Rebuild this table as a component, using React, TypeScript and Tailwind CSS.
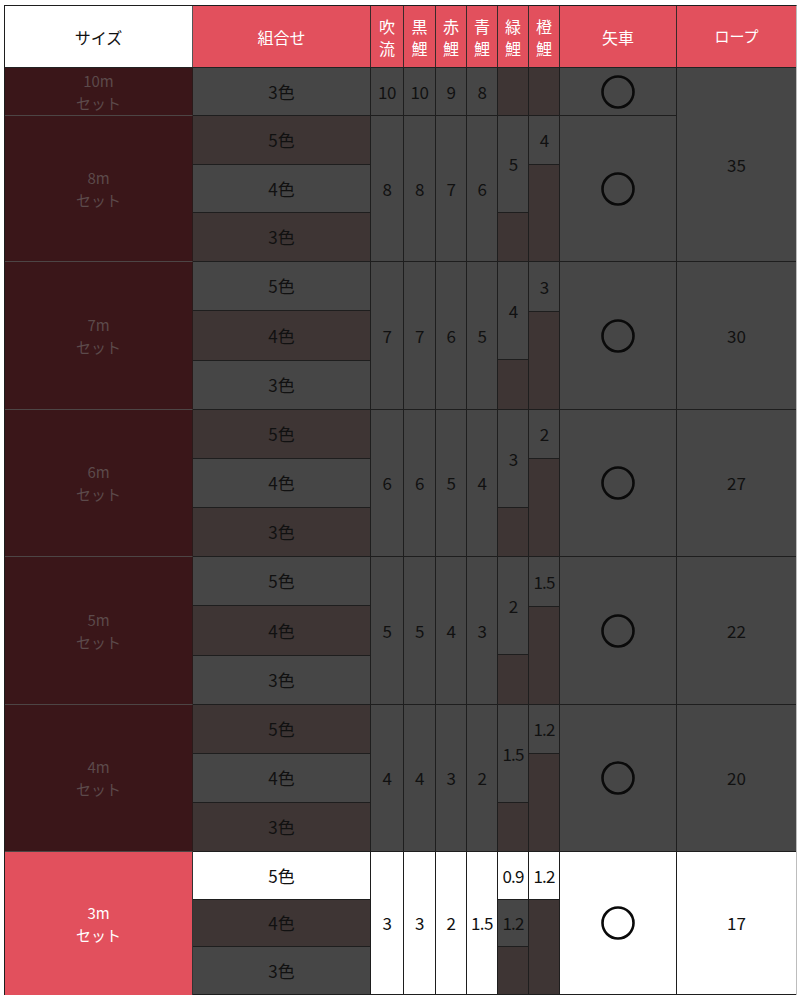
import React from "react";

const G = "bg-[#464646]";
const B = "bg-[#3e3534]";
const W = "bg-white";

type Sub = { v: string; span: 1 | 2 | 3; bg: string };

interface Group {
  size: string;
  h: string;
  combos: { label: string; bg: string }[];
  nums: string[];
  numBg: string;
  green: Sub[];
  orange: Sub[];
  wheelBg: string;
  hi?: boolean;
}

const grow: Record<number, string> = { 1: "flex-1", 2: "flex-[2]", 3: "flex-[3]" };

const groups: Group[] = [
  {
    size: "10m", h: "h-[48px]",
    combos: [{ label: "3色", bg: G }],
    nums: ["10", "10", "9", "8"], numBg: G,
    green: [{ v: "", span: 1, bg: B }],
    orange: [{ v: "", span: 1, bg: B }],
    wheelBg: G,
  },
  {
    size: "8m", h: "h-[146px]",
    combos: [{ label: "5色", bg: B }, { label: "4色", bg: G }, { label: "3色", bg: B }],
    nums: ["8", "8", "7", "6"], numBg: G,
    green: [{ v: "5", span: 2, bg: G }, { v: "", span: 1, bg: B }],
    orange: [{ v: "4", span: 1, bg: G }, { v: "", span: 2, bg: B }],
    wheelBg: G,
  },
  {
    size: "7m", h: "h-[148px]",
    combos: [{ label: "5色", bg: G }, { label: "4色", bg: B }, { label: "3色", bg: G }],
    nums: ["7", "7", "6", "5"], numBg: G,
    green: [{ v: "4", span: 2, bg: G }, { v: "", span: 1, bg: B }],
    orange: [{ v: "3", span: 1, bg: G }, { v: "", span: 2, bg: B }],
    wheelBg: G,
  },
  {
    size: "6m", h: "h-[147px]",
    combos: [{ label: "5色", bg: B }, { label: "4色", bg: G }, { label: "3色", bg: B }],
    nums: ["6", "6", "5", "4"], numBg: G,
    green: [{ v: "3", span: 2, bg: G }, { v: "", span: 1, bg: B }],
    orange: [{ v: "2", span: 1, bg: G }, { v: "", span: 2, bg: B }],
    wheelBg: G,
  },
  {
    size: "5m", h: "h-[148px]",
    combos: [{ label: "5色", bg: G }, { label: "4色", bg: B }, { label: "3色", bg: G }],
    nums: ["5", "5", "4", "3"], numBg: G,
    green: [{ v: "2", span: 2, bg: G }, { v: "", span: 1, bg: B }],
    orange: [{ v: "1.5", span: 1, bg: G }, { v: "", span: 2, bg: B }],
    wheelBg: G,
  },
  {
    size: "4m", h: "h-[147px]",
    combos: [{ label: "5色", bg: B }, { label: "4色", bg: G }, { label: "3色", bg: B }],
    nums: ["4", "4", "3", "2"], numBg: G,
    green: [{ v: "1.5", span: 2, bg: G }, { v: "", span: 1, bg: B }],
    orange: [{ v: "1.2", span: 1, bg: G }, { v: "", span: 2, bg: B }],
    wheelBg: G,
  },
  {
    size: "3m", h: "h-[143px]", hi: true,
    combos: [{ label: "5色", bg: W }, { label: "4色", bg: B }, { label: "3色", bg: G }],
    nums: ["3", "3", "2", "1.5"], numBg: W,
    green: [{ v: "0.9", span: 1, bg: W }, { v: "1.2", span: 1, bg: G }, { v: "", span: 1, bg: B }],
    orange: [{ v: "1.2", span: 1, bg: W }, { v: "", span: 2, bg: B }],
    wheelBg: W,
  },
];

const rope = [
  { v: "35", h: "h-[194px]", bg: G },
  { v: "30", h: "h-[148px]", bg: G },
  { v: "27", h: "h-[147px]", bg: G },
  { v: "22", h: "h-[148px]", bg: G },
  { v: "20", h: "h-[147px]", bg: G },
  { v: "17", h: "h-[143px]", bg: W },
];

const numW = ["w-[33px]", "w-[32px]", "w-[31px]", "w-[31px]"];

function Circle() {
  return (
    <svg width="36" height="36" viewBox="0 0 36 36">
      <circle cx="18" cy="18" r="15.5" fill="none" stroke="#0a0a0a" strokeWidth="2.6" />
    </svg>
  );
}

function VHead({ a, b, w }: { a: string; b: string; w: string }) {
  return (
    <div className={`${w} flex flex-col items-center justify-center border-r border-[#3a2a2a] text-[16px] leading-[22px] text-white`}>
      <span>{a}</span>
      <span>{b}</span>
    </div>
  );
}

export default function App() {
  return (
    <div className="bg-white w-[800px] h-[1000px] pt-[5px] pl-[4px] font-['Noto_Sans_CJK_JP','Noto_Sans',sans-serif]">
      <div className="w-[793px] border-t border-l border-r border-t-[#1e1e1e] border-l-[#1e1e1e] border-r-[#bdbdbd] flex flex-col">
        {/* header */}
        <div className="h-[62px] flex border-b border-[#222] bg-[#e2505d]">
          <div className="w-[188px] bg-white flex items-center justify-center text-[16px] text-[#111] border-r border-[#555]">サイズ</div>
          <div className="w-[178px] flex items-center justify-center text-[16px] text-white border-r border-[#3a2a2a]">組合せ</div>
          <VHead a="吹" b="流" w="w-[33px]" />
          <VHead a="黒" b="鯉" w="w-[32px]" />
          <VHead a="赤" b="鯉" w="w-[31px]" />
          <VHead a="青" b="鯉" w="w-[31px]" />
          <VHead a="緑" b="鯉" w="w-[31px]" />
          <VHead a="橙" b="鯉" w="w-[31px]" />
          <div className="w-[117px] flex items-center justify-center text-[16px] text-white border-r border-[#3a2a2a]">矢車</div>
          <div className="flex-1 flex items-center justify-center text-[15px] text-white">ロープ</div>
        </div>

        {/* body */}
        <div className="flex text-[17px] text-[#111]">
          <div className="w-[672px] flex flex-col">
            {groups.map((g) => (
              <div key={g.size} className={`${g.h} flex`}>
                <div
                  className={`w-[188px] flex flex-col items-center justify-center border-r text-[15px] leading-[22px] ${
                    g.hi
                      ? "bg-[#e2505d] text-white border-[#333]"
                      : "bg-[#3a1619] text-[#5c4a4b] border-b border-b-[#4d4545] border-r-[#2a1a1a]"
                  }`}
                >
                  <span>{g.size}</span>
                  <span>セット</span>
                </div>
                <div className="w-[178px] flex flex-col">
                  {g.combos.map((c) => (
                    <div key={c.label} className={`flex-1 flex items-center justify-center border-r border-b border-[#1e1e1e] ${c.bg}`}>
                      {c.label}
                    </div>
                  ))}
                </div>
                {g.nums.map((n, i) => (
                  <div key={i} className={`${numW[i]} flex items-center justify-center border-r border-b border-[#1e1e1e] ${g.numBg} tracking-[-0.5px]`}>
                    {n}
                  </div>
                ))}
                {[g.green, g.orange].map((col, ci) => (
                  <div key={ci} className="w-[31px] flex flex-col">
                    {col.map((s, si) => (
                      <div key={si} className={`${grow[s.span]} flex items-center justify-center border-r border-b border-[#1e1e1e] ${s.bg} tracking-[-0.8px]`}>
                        {s.v}
                      </div>
                    ))}
                  </div>
                ))}
                <div className={`w-[117px] flex items-center justify-center border-r border-b border-[#1e1e1e] ${g.wheelBg}`}>
                  <Circle />
                </div>
              </div>
            ))}
          </div>
          <div className="flex-1 flex flex-col">
            {rope.map((r) => (
              <div key={r.v} className={`${r.h} flex items-center justify-center border-b border-[#1e1e1e] ${r.bg}`}>
                {r.v}
              </div>
            ))}
          </div>
        </div>
      </div>
    </div>
  );
}
